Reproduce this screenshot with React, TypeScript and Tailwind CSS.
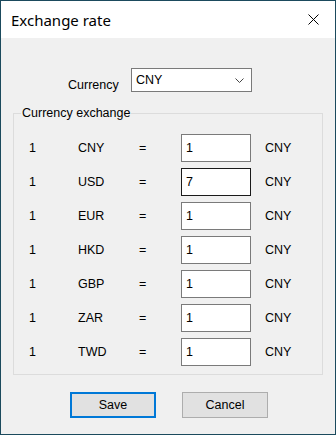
import React from "react";

const rows = ["CNY", "USD", "EUR", "HKD", "GBP", "ZAR", "TWD"];
const values: Record<string, string> = { USD: "7" };

export default function App() {
  return (
    <div
      className="w-[336px] h-[435px] border border-[#1b4a5d] bg-[#f0f0f0] flex flex-col text-black text-[12.5px] leading-[16px]"
      style={{ fontFamily: '"Liberation Sans", Arial, sans-serif' }}
    >
      {/* Title bar */}
      <div className="h-[37px] bg-white flex items-center justify-between pl-[10px] pr-[14px] shrink-0">
        <span className="text-[15px] leading-[20px]" style={{ fontFamily: '"Noto Sans", sans-serif' }}>
          Exchange rate
        </span>
        <svg width="11" height="11" viewBox="0 0 11 11" className="mr-[2px]">
          <path d="M0.5 0.5 L10.5 10.5 M10.5 0.5 L0.5 10.5" stroke="#000" strokeWidth="1" fill="none" />
        </svg>
      </div>

      {/* Currency select row */}
      <div className="flex items-start mt-[30px] ml-[67px]">
        <span className="mt-[9px] w-[63px]">Currency</span>
        <div className="w-[121px] h-[24px] bg-white border border-[#7a7a7a] flex items-start justify-between pl-[4px] pr-[7px] pt-[3px]">
          <span>CNY</span>
          <svg width="9" height="6" viewBox="0 0 9 6" className="mt-[6px]">
            <path d="M0.5 0.5 L4.5 4.5 L8.5 0.5" stroke="#444" strokeWidth="1" fill="none" />
          </svg>
        </div>
      </div>

      {/* Group box */}
      <fieldset className="ml-[12px] mt-[12px] w-[310px] border border-[#dcdcdc] pt-[13px] pb-[8px]">
        <legend className="ml-[7px] px-[1px] leading-[16px]">Currency exchange</legend>
        <div className="flex flex-col gap-[6px] pl-[15px]">
          {rows.map((c) => (
            <div key={c} className="grid grid-cols-[49px_61px_42px_84px_auto] items-center h-[28px]">
              <span>1</span>
              <span>{c}</span>
              <span>=</span>
              <div
                className={
                  "w-[70px] h-[28px] bg-white border flex items-start pl-[4px] pt-[5px] " +
                  (c === "USD" ? "border-[#1a1a1a]" : "border-[#7a7a7a]")
                }
              >
                {values[c] ?? "1"}
              </div>
              <span>CNY</span>
            </div>
          ))}
        </div>
      </fieldset>

      {/* Buttons */}
      <div className="flex mt-[17px] ml-[69px] gap-[26px]">
        <button className="w-[86px] h-[26px] bg-[#e1e1e1] border-2 border-[#0078d7] flex items-center justify-center">
          Save
        </button>
        <button className="w-[86px] h-[26px] bg-[#e1e1e1] border border-[#adadad] flex items-center justify-center">
          Cancel
        </button>
      </div>
    </div>
  );
}
